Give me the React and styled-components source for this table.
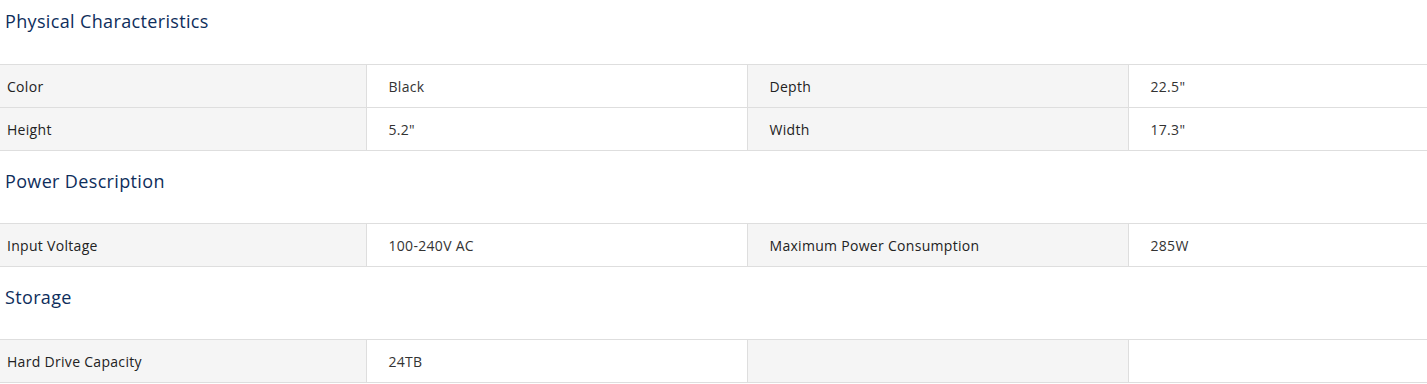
import styled, { createGlobalStyle } from "styled-components";

const GlobalStyle = createGlobalStyle`
  body {
    margin: 0;
    background: #fff;
    font-family: "Open Sans", "Liberation Sans", sans-serif;
  }
`;

const Specs = styled.div`
  width: 1427px;
`;

const Section = styled.section`
  padding-top: ${(p) => (p.$first ? "9px" : "18px")};
`;

const Title = styled.h3`
  margin: 0 0 ${(p) => (p.$first ? "31px" : "30px")} 5px;
  font-size: 18px;
  line-height: 24px;
  font-weight: 500;
  letter-spacing: 0.35px;
  color: #0e2e5c;
`;

const Table = styled.table`
  width: 100%;
  border-collapse: collapse;
  table-layout: fixed;
  font-size: 14px;
  letter-spacing: 0.3px;
`;

const Cell = styled.td`
  height: 42px;
  padding: 0 ${(p) => (p.$label ? "8px" : "22px")} 0
    ${(p) => (p.$first ? "7px" : "22px")};
  border-top: 1px solid #dedede;
  border-bottom: 1px solid #dedede;
  border-left: ${(p) => (p.$first ? "none" : "1px solid #dedede")};
  background: ${(p) => (p.$label ? "#f5f5f5" : "#fff")};
  color: ${(p) => (p.$label ? "#222" : "#333")};
  font-weight: ${(p) => (p.$label ? 500 : 400)};
  vertical-align: middle;
`;

const sections = [
  {
    title: "Physical Characteristics",
    rows: [
      ["Color", "Black", "Depth", '22.5"'],
      ["Height", '5.2"', "Width", '17.3"'],
    ],
  },
  {
    title: "Power Description",
    rows: [["Input Voltage", "100-240V AC", "Maximum Power Consumption", "285W"]],
  },
  {
    title: "Storage",
    rows: [["Hard Drive Capacity", "24TB", "", ""]],
  },
];

export default function App() {
  return (
    <>
      <GlobalStyle />
      <Specs>
        {sections.map((s, i) => (
          <Section key={s.title} $first={i === 0}>
            <Title $first={i === 0}>{s.title}</Title>
            <Table>
              <colgroup>
                <col style={{ width: 366 }} />
                <col style={{ width: 381 }} />
                <col style={{ width: 381 }} />
                <col />
              </colgroup>
              <tbody>
                {s.rows.map((r) => (
                  <tr key={r[0]}>
                    <Cell $label $first>{r[0]}</Cell>
                    <Cell>{r[1]}</Cell>
                    <Cell $label>{r[2]}</Cell>
                    <Cell>{r[3]}</Cell>
                  </tr>
                ))}
              </tbody>
            </Table>
          </Section>
        ))}
      </Specs>
    </>
  );
}
